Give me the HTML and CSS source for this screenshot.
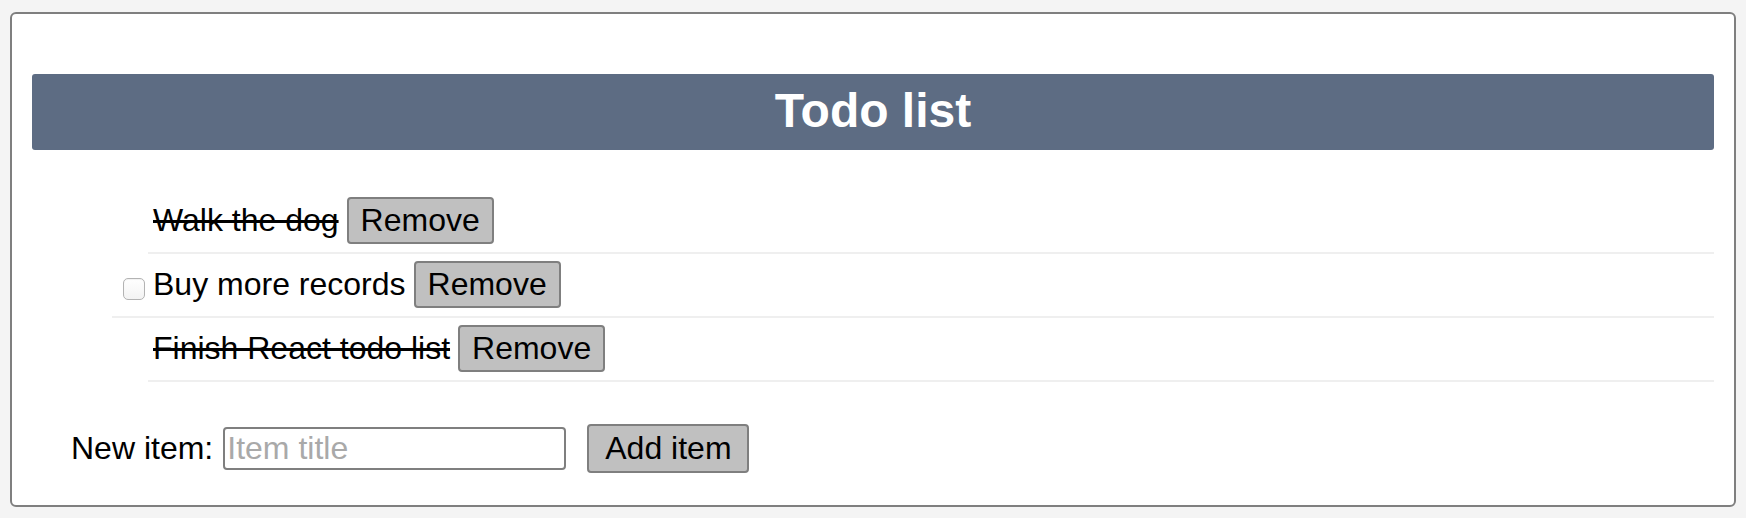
FILE: index.html
```html
<!DOCTYPE html>
<html lang="en">
<head>
<meta charset="utf-8">
<title>Todo list</title>
<link rel="stylesheet" href="styles.css">
</head>
<body>
  <div class="card">
    <h1 class="title">Todo list</h1>
    <ul class="todo-list">
      <li class="todo-item todo-item--done">
        <span class="todo-text">Walk the dog</span>
        <button class="btn" type="button">Remove</button>
      </li>
      <li class="todo-item todo-item--open">
        <input class="todo-check" type="checkbox">
        <span class="todo-text">Buy more records</span>
        <button class="btn" type="button">Remove</button>
      </li>
      <li class="todo-item todo-item--done">
        <span class="todo-text">Finish React todo list</span>
        <button class="btn" type="button">Remove</button>
      </li>
    </ul>
    <form class="new-item">
      <label class="new-item__label" for="title">New item:</label>
      <input class="new-item__input" id="title" type="text" placeholder="Item title">
      <button class="btn btn--add" type="button">Add item</button>
    </form>
  </div>
</body>
</html>
```
FILE: styles.css
```css
html, body {
  margin: 0;
  padding: 0;
}

body {
  background: #f4f4f4;
  padding: 12px 10px 10px;
  font-family: "Liberation Sans", Arial, Helvetica, sans-serif;
  font-size: 32px;
  color: #000;
}

.card {
  background: #fff;
  border: 2px solid #7f7f7f;
  border-radius: 6px;
  padding: 60px 20px 32px;
}

.title {
  margin: 0;
  background: #5d6c83;
  color: #fff;
  border-radius: 3px;
  text-align: center;
  font-size: 48px;
  font-weight: bold;
  line-height: 56px;
  padding: 9px 0 11px;
}

.todo-list {
  list-style: none;
  margin: 40px 0 0;
  padding: 0 0 0 116px;
}

.todo-item {
  display: flex;
  align-items: center;
  gap: 8px;
  padding: 7px 0 8px 5px;
  border-bottom: 2px solid #efefef;
  line-height: 37px;
}

.todo-item--done .todo-text {
  text-decoration: line-through;
}

.todo-item--open {
  margin-left: -36px;
  padding-left: 11px;
}

.todo-check {
  appearance: none;
  -webkit-appearance: none;
  width: 22px;
  height: 22px;
  margin: 9px 0 0 0;
  border: 1px solid #b3b3b3;
  border-radius: 5px;
  background: linear-gradient(#ffffff, #f3f3f3);
  box-shadow: inset 0 1px 1px rgba(0, 0, 0, 0.06);
  flex: none;
}

.btn {
  font-family: inherit;
  font-size: 32px;
  line-height: 37px;
  color: #000;
  background: #c0c0c0;
  border: 2px solid #7f7f7f;
  border-radius: 4px;
  padding: 3px 12px;
  margin: 0;
}

.btn--add {
  padding: 4px 15px 4px 16px;
  margin-left: 21px;
}

.new-item {
  display: flex;
  align-items: center;
  margin: 42px 0 0;
  padding-left: 39px;
}

.new-item__label {
  line-height: 37px;
  margin-right: 10px;
}

.new-item__input {
  font-family: inherit;
  font-size: 32px;
  line-height: 37px;
  width: 335px;
  padding: 1px 2px;
  margin: 0;
  border: 2px solid #7f7f7f;
  border-radius: 4px;
  color: #000;
}

.new-item__input::placeholder {
  color: #a9a9a9;
}
```
